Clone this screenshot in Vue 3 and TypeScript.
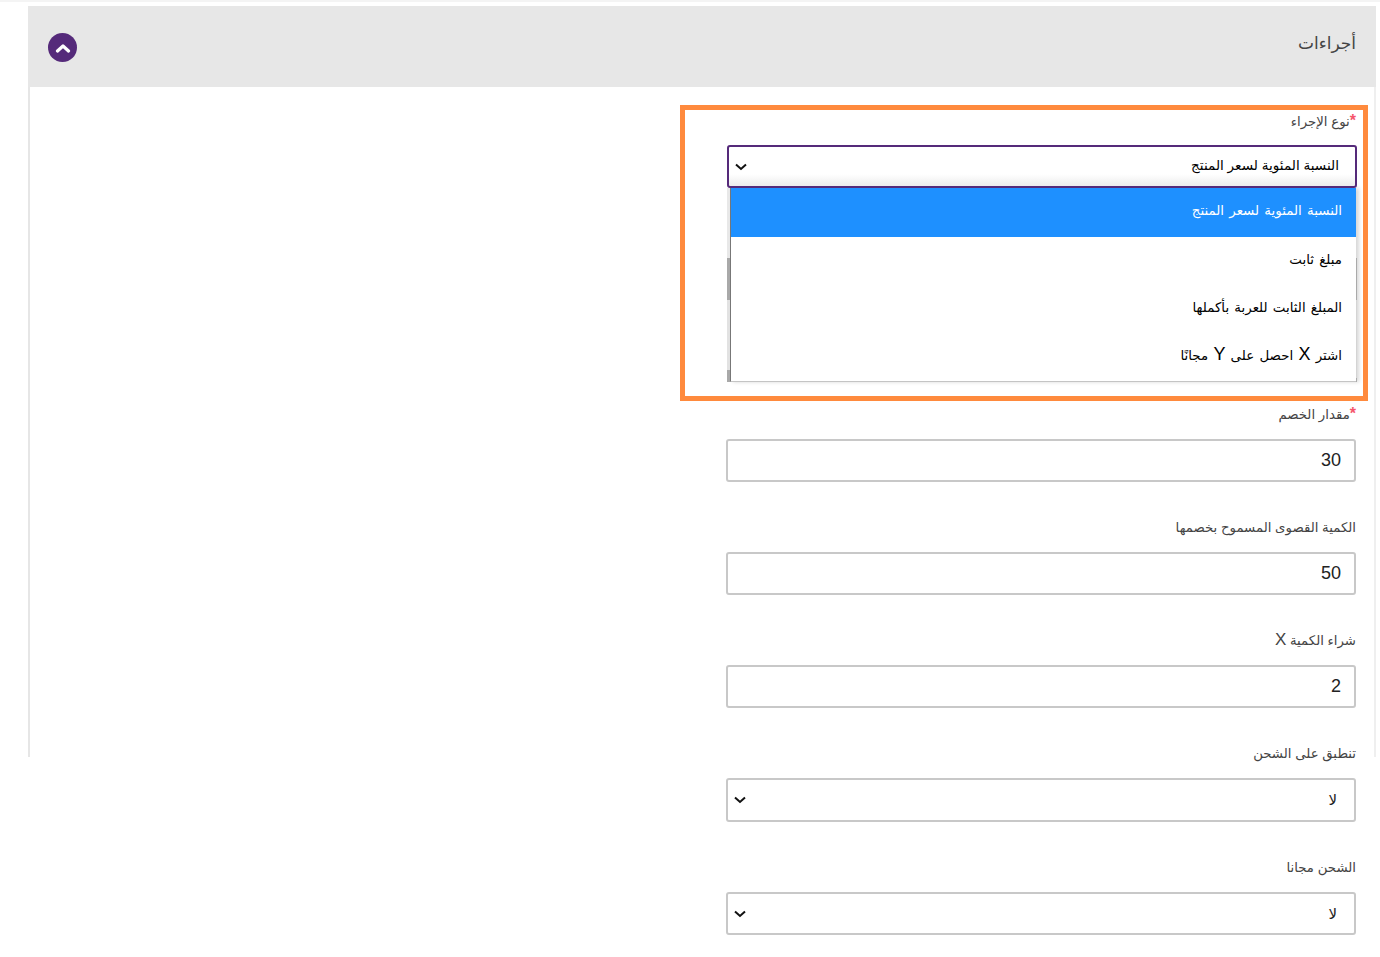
<script setup lang="ts">
import { ref } from "vue";

const options = ref([
	"النسبة المئوية لسعر المنتج",
	"مبلغ ثابت",
	"المبلغ الثابت للعربة بأكملها",
	"اشتر X احصل على Y مجانًا",
]);

const fields = ref([
	{ label: "مقدار الخصم", value: "30", required: true, select: false },
	{ label: "الكمية القصوى المسموح بخصمها", value: "50", required: false, select: false },
	{ label: "شراء الكمية X", value: "2", required: false, select: false },
	{ label: "تنطبق على الشحن", value: "لا", required: false, select: true },
	{ label: "الشحن مجانا", value: "لا", required: false, select: true },
]);

// latin letters are set larger than the arabic around them
const pieces = (text: string) => text.split(/([XY])/);
const isLatin = (piece: string) => piece === "X" || piece === "Y";
</script>

<template>
	<div class="page">
		<div class="topline"></div>
		<section class="panel">
			<header class="panel-head" dir="rtl">
				<h2 class="title">أجراءات</h2>
				<button class="toggle" type="button">
					<svg width="16" height="10" viewBox="0 0 16 10">
						<path d="M2.5 8 L8 3 L13.5 8" fill="none" stroke="#fff" stroke-width="3.2" stroke-linecap="round" stroke-linejoin="round" />
					</svg>
				</button>
			</header>
			<div class="panel-body">
				<form class="form" dir="rtl" @submit.prevent>
					<div class="field first">
						<label class="label"><span class="star">*</span>نوع الإجراء</label>
						<div class="control select active">
							<span class="active-text">{{ options[0] }}</span>
							<svg class="chev" width="12" height="8" viewBox="0 0 12 8">
								<path d="M1 1.5 L6 6 L11 1.5" fill="none" stroke="#111" stroke-width="2" />
							</svg>
						</div>
						<ul class="dropdown">
							<li v-for="(o, i) in options" :key="o" :class="['option', i === 0 ? 'selected' : '']">
								<template v-for="(p, n) in pieces(o)" :key="n"><span v-if="isLatin(p)" class="latin-big">{{ p }}</span><template v-else>{{ p }}</template></template>
							</li>
						</ul>
					</div>
					<div v-for="f in fields" :key="f.label" class="field">
						<label class="label">
							<span v-if="f.required" class="star">*</span>
							<template v-for="(p, n) in pieces(f.label)" :key="n"><span v-if="isLatin(p)" class="latin">{{ p }}</span><template v-else>{{ p }}</template></template>
						</label>
						<div :class="['control', f.select ? 'select' : '']">
							<span :class="f.select ? 'select-text' : 'input-text'">{{ f.value }}</span>
							<svg v-if="f.select" class="chev" width="12" height="8" viewBox="0 0 12 8">
								<path d="M1 1.5 L6 6 L11 1.5" fill="none" stroke="#111" stroke-width="2" />
							</svg>
						</div>
					</div>
				</form>
			</div>
		</section>
		<div class="highlight"></div>
	</div>
</template>

<style>
html,
body {
	margin: 0;
	background: #fff;
	overflow: hidden;
}
</style>

<style scoped>
.page {
	position: relative;
	height: 957px;
	overflow: hidden;
	font-family: "Liberation Sans", "DejaVu Sans", sans-serif;
	color: #555;
}
.topline {
	height: 2px;
	background: #f4f4f4;
	margin-bottom: 4px;
}
.panel {
	margin: 0 4px 0 28px;
	height: 751px;
	border-left: 2px solid #e6e6e6;
	border-right: 2px solid #efefef;
}
.panel-head {
	display: flex;
	align-items: center;
	justify-content: space-between;
	height: 81px;
	margin: 0 -2px;
	padding: 2px 20px 0 20px;
	box-sizing: border-box;
	background: #e7e7e7;
}
.title {
	margin: 0 0 8px;
	font-size: 17px;
	font-weight: 400;
	color: #444;
}
.toggle {
	display: flex;
	align-items: center;
	justify-content: center;
	width: 29px;
	height: 29px;
	padding: 0;
	border: 0;
	border-radius: 50%;
	background: #552a7a;
}
.panel-body {
	padding: 24px 18px 0 0;
}
.form {
	width: 630px;
	margin-left: auto;
}
.field {
	margin-bottom: 35px;
}
.field.first {
	margin-bottom: 22px;
}
.label {
	display: block;
	height: 20px;
	margin-bottom: 15px;
	font-size: 13.3px;
	line-height: 22px;
	color: #444;
}
.first .label {
	margin-bottom: 14px;
}
.star {
	color: #f5556b;
	font-size: 16px;
	font-weight: 700;
	line-height: 0;
}
.latin {
	font-size: 17px;
	line-height: 0;
}
.latin-big {
	font-size: 18px;
	line-height: 0;
}
.control {
	box-sizing: border-box;
	display: flex;
	align-items: center;
	justify-content: space-between;
	height: 43px;
	padding: 0 13px 0 6px;
	border: 2px solid #c8c8c8;
	border-radius: 3px;
	background: #fff;
}
.control.select {
	height: 44px;
	padding-right: 17px;
}
.field:last-child .control.select {
	height: 43px;
}
.control.active {
	height: 43px;
	padding-right: 16px;
	border-color: #552a7a;
	background: linear-gradient(to bottom, #fff 70%, #ececec 100%);
	position: relative;
	z-index: 1;
	margin-left: 1px;
	margin-right: -1px;
}
.input-text {
	font-size: 18px;
	color: #222;
}
.select-text {
	font-size: 15px;
	color: #222;
}
.active-text {
	margin-bottom: 3px;
	font-size: 13.6px;
	color: #000;
}
.chev {
	flex: none;
}
.dropdown {
	position: relative;
	box-sizing: border-box;
	height: 194px;
	margin: 0 0 0 4px;
	padding: 0;
	list-style: none;
	background: #fff;
	border-left: 1px solid #777;
	border-bottom: 1px solid #c4c4c4;
	box-shadow: 3px 0 4px rgba(0, 0, 0, 0.16);
}
.dropdown::before {
	content: "";
	position: absolute;
	left: -4px;
	top: 0;
	bottom: -1px;
	width: 3px;
	background: linear-gradient(
		to bottom,
		#e8e8e8 70px,
		#a9a9a9 70px,
		#a9a9a9 112px,
		#e2e2e2 112px,
		#e2e2e2 182px,
		#a9a9a9 182px
	);
}
.dropdown::after {
	content: "";
	position: absolute;
	right: -1px;
	top: 70px;
	bottom: -1px;
	width: 1px;
	background: linear-gradient(to bottom, #aaa 42px, #d4d4d4 42px, #d4d4d4 120px, #aaa 120px);
}
.option {
	height: 48px;
	padding-right: 14px;
	font-size: 13.4px;
	word-spacing: 1.5px;
	line-height: 46px;
	color: #000;
}
.option.selected {
	height: 49px;
	line-height: 46px;
	background: #1e90ff;
	color: #fff;
}
.highlight {
	position: absolute;
	left: 680px;
	top: 105px;
	width: 688px;
	height: 296px;
	box-sizing: border-box;
	border: 5px solid #ff8a3d;
	pointer-events: none;
}
</style>
